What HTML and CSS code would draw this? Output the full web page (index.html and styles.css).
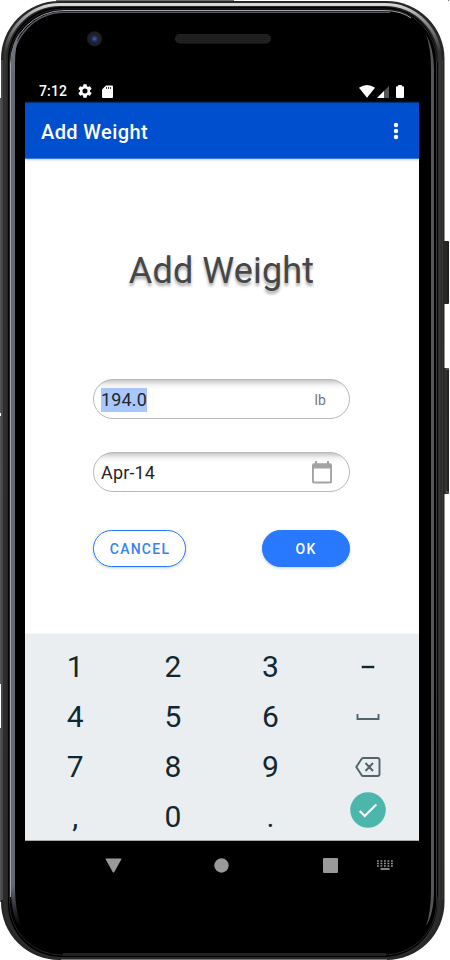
FILE: index.html
```html
<!DOCTYPE html>
<html lang="en">
<head>
<meta charset="utf-8">
<title>Add Weight</title>
<link rel="stylesheet" href="styles.css">
</head>
<body>
<div class="phone">
  <svg class="frame" width="450" height="960" viewBox="0 0 450 960" aria-hidden="true">
    <defs>
      <linearGradient id="rim" x1="0" y1="0" x2="0" y2="1">
        <stop offset="0" stop-color="#d6d8d9"/><stop offset=".012" stop-color="#a0a2a3"/><stop offset=".05" stop-color="#333"/><stop offset="1" stop-color="#2b2b2b"/>
      </linearGradient>
      <linearGradient id="metal" x1="0" y1="0" x2="0" y2="1">
        <stop offset="0" stop-color="#77777b"/><stop offset=".05" stop-color="#656975"/><stop offset=".94" stop-color="#656975"/><stop offset=".985" stop-color="#000"/>
      </linearGradient>
      <pattern id="mesh" width="2" height="2" patternUnits="userSpaceOnUse">
        <rect width="2" height="2" fill="#1b1c1c"/><rect width="1" height="1" fill="#262727"/>
      </pattern>
      <radialGradient id="lens">
        <stop offset="0" stop-color="#506aa8"/><stop offset=".25" stop-color="#263b74"/><stop offset=".55" stop-color="#17203b"/><stop offset=".65" stop-color="#222224"/><stop offset="1" stop-color="#1d1d1e"/>
      </radialGradient>
    </defs>
    <rect x="443" y="241" width="6" height="63" rx="1" fill="#292929"/>
    <rect x="443" y="368" width="6" height="126" rx="1" fill="#333"/>
    <path d="M448 242v61M448 370v122" stroke="#171717"/>
    <path d="M446 369h2.500M446 492h2.500" stroke="#777"/>
    <path d="M448.500 0v1" stroke="#777"/>
    <path d="M0 98h1v315h-1zM0 416h1v268h-1zM0 728h1v174h-1z" fill="#555"/>
    <rect x="1" y="1" width="443.500" height="959" rx="58" fill="#262626"/>
    <path d="M56 .5H234" stroke="#707070"/>
    <path d="M2 60V900" stroke="#484848" stroke-width="2"/>
    <rect x="5" y="4.500" width="435" height="952" rx="55" fill="none" stroke="url(#rim)" stroke-width="3"/>
    <rect x="8" y="7" width="429" height="950" rx="53" fill="#000"/>
    <rect x="9.500" y="9" width="427" height="946" rx="52" fill="none" stroke="#242424"/>
    <path d="M10.500 897V64A53.500 53.500 0 0 1 64 10.500H385Q402 11 411 18" fill="none" stroke="#a4a3a2"/>
    <path d="M13 64A51.500 51.500 0 0 1 64 12.300H390" fill="none" stroke="#555761" stroke-width="1.500"/>
    <path d="M11 890V64Q11 44 20 32Q15 45 15 64V890Q16 926 30 940Q11 925 11 890Z" fill="url(#metal)"/>
    <path d="M426 34Q434 49 434 69V890Q434 914 426 926Q431 912 431 890V69Q431 48 426 34Z" fill="#55555b"/>
    <path d="M436.500 62V897M439.500 60V900M442.500 60V900" stroke="#363636"/>
    <path d="M437.500 62V897M8.500 62V897" stroke="#060606"/>
    <path d="M63 954.500H386" stroke="#222" stroke-width="3"/>
    <path d="M61 959.500H387" stroke="#777"/>
    <circle cx="94.500" cy="38.800" r="7.500" fill="url(#lens)"/>
    <rect x="175.500" y="34.500" width="95" height="8.500" rx="4.200" fill="url(#mesh)" stroke="#242424"/>
  </svg>

  <main class="screen">
    <div class="status">
      <span class="time">7:12</span>
      <svg class="gear" width="14" height="14" viewBox="2 2 20 20"><path fill="#fff" d="M19.140 12.940c.04-.3.060-.61.060-.94 0-.32-.02-.64-.07-.94l2.030-1.580c.18-.14.23-.41.120-.61l-1.920-3.320c-.12-.22-.37-.29-.59-.22l-2.390.96c-.5-.38-1.030-.7-1.620-.94L14.400 2.810c-.04-.24-.24-.41-.48-.41h-3.840c-.24 0-.43.17-.47.41L9.250 5.350C8.660 5.590 8.120 5.920 7.630 6.290L5.240 5.330c-.22-.08-.47 0-.59.22L2.740 8.870c-.12.21-.08.47.12.61l2.030 1.580c-.05.3-.09.63-.09.940s.02.64.07.940l-2.030 1.580c-.18.14-.23.410-.12.610l1.920 3.320c.12.220.370.290.590.220l2.390-.96c.5.380 1.030.7 1.620.94l.36 2.540c.05.240.240.410.480.410h3.840c.24 0 .44-.17.470-.41l.36-2.540c.59-.24 1.130-.56 1.620-.94l2.390.96c.22.080.470 0 .590-.22l1.920-3.320c.12-.22.070-.47-.12-.61l-2.010-1.580zM12 15.600A3.600 3.600 0 1 1 12 8.400a3.600 3.600 0 0 1 0 7.200z"/></svg>
      <svg class="card" width="11" height="13" viewBox="0 0 11 13"><path d="M4 .5h6q1 0 1 1V12q0 1-1 1H1q-1 0-1-1V4.500z" fill="#fff"/><path d="M4.500 2v2M6.500 2v2M8.500 2v2" stroke="#444"/></svg>
      <span class="signals">
        <svg width="16" height="13" viewBox="0 0 16 13"><path d="M0 2.700Q8-2.600 16 2.700L8 12.800Z" fill="#fff"/></svg>
        <svg class="cell" width="12" height="13" viewBox="0 0 12 13"><path d="M0 13L12 1V13Z" fill="#555"/><path d="M0 13L7 6V13Z" fill="#fff"/></svg>
        <svg class="battery" width="8" height="13" viewBox="0 0 8 13"><path d="M2.200 0h3.600v1.300H7q1 0 1 1V12q0 1-1 1H1q-1 0-1-1V2.300q0-1 1-1h1.200z" fill="#fff"/></svg>
      </span>
    </div>

    <header class="appbar">
      <span class="apptitle">Add Weight</span>
      <svg width="6" height="18" viewBox="0 0 6 18"><g fill="#fff"><circle cx="3" cy="3" r="2.200"/><circle cx="3" cy="9" r="2.200"/><circle cx="3" cy="15" r="2.200"/></g></svg>
    </header>

    <section class="content">
      <h1 class="heading">Add Weight</h1>
      <div class="field"><span class="selected">194.0</span><span class="unit">lb</span></div>
      <div class="field date"><span>Apr-14</span>
        <svg class="calendar" width="20" height="23" viewBox="0 0 20 23"><path d="M3 0h2v2.200h10V0h2v2.200h1q2 0 2 2V20.500q0 2-2 2H2q-2 0-2-2V4.200q0-2 2-2h1zM1.900 7.500v13.100h16.200V7.500z" fill="#a4a4a4"/></svg>
      </div>
      <div class="actions"><button class="button cancel">CANCEL</button><button class="button ok">OK</button></div>
    </section>

    <section class="keyboard">
      <span class="key">1</span><span class="key">2</span><span class="key">3</span>
      <span class="key"><svg width="14" height="4" viewBox="0 0 14 4"><path d="M.7 2h12.600" stroke="#112832" stroke-width="2.400"/></svg></span>
      <span class="key">4</span><span class="key">5</span><span class="key">6</span>
      <span class="key"><svg width="24" height="6" viewBox="0 0 24 6"><path d="M1.500 0v5h21V0" fill="none" stroke="#51636c" stroke-width="1.900"/></svg></span>
      <span class="key">7</span><span class="key">8</span><span class="key">9</span>
      <span class="key"><svg width="26" height="20" viewBox="0 0 26 20"><path d="M1.300 10L6.500 2Q7 1 8.200 1H22.500Q24.500 1 24.500 3V17Q24.500 19 22.500 19H8.200Q7 19 6.500 18ZM10.500 6l7.500 8M18 6l-7.500 8" fill="none" stroke="#51636c" stroke-width="1.900"/></svg></span>
      <span class="key">,</span><span class="key">0</span><span class="key">.</span>
      <span class="key"><svg class="done" width="36" height="36" viewBox="0 0 36 36"><circle cx="18" cy="18" r="17.800" fill="#4db6ac"/><path d="M9.700 18.900l5 5L26.300 12.400" fill="none" stroke="#fff" stroke-width="2.100"/></svg></span>
    </section>

    <nav class="navigation">
      <svg width="17" height="15" viewBox="0 0 17 15"><path d="M1.200.5h14.600q1 0 .5 1L9.300 14q-.8 1-1.600 0L.700 1.500Q.2.500 1.200.5" fill="#999"/></svg>
      <svg width="15" height="15" viewBox="0 0 15 15"><circle cx="7.500" cy="7.500" r="7.200" fill="#999"/></svg>
      <svg class="recents" width="15" height="15" viewBox="0 0 15 15"><rect width="15" height="15" rx="1" fill="#999"/></svg>
      <svg class="ime" width="16" height="10" viewBox="0 0 16 10"><path d="M0 1h16M0 3.500h16M0 6h16" stroke="#999" stroke-width="1.600" stroke-dasharray="1.800 1.700"/><path d="M3.500 9h9" stroke="#999" stroke-width="1.700"/></svg>
    </nav>
  </main>
</div>
</body>
</html>
```
FILE: styles.css
```css
* { box-sizing: border-box; }
body { margin: 0; background: #fff; font-family: Roboto, sans-serif; overflow: hidden; }
svg { display: block; flex: none; }
.phone { position: relative; width: 450px; height: 960px; padding: 80px 31px 0 25px; }
.frame { position: absolute; inset: 0; }
.screen { position: relative; width: 394px; overflow: hidden; }
.status { display: flex; align-items: center; height: 22px; padding: 0 15px 0 14px; color: #fff; }
.time { width: 39px; font-size: 14px; font-weight: 500; letter-spacing: .15px; }
.card { margin-left: 10px; }
.signals { display: flex; margin-left: auto; }
.cell { margin-left: 2px; }
.battery { margin-left: 7px; }
.appbar { position: relative; z-index: 1; display: flex; align-items: center; justify-content: space-between; height: 57px; padding: 1px 20px 0 16px; background: #004fce; border-top: 1px solid #002e77; border-bottom: 1px solid #387bdc; box-shadow: 0 1px 2px #ccc; color: #fff; }
.apptitle { font-size: 20px; line-height: 26px; font-weight: 500; letter-spacing: .4px; padding-top: 2px; }
.content { height: 474px; padding: 90px 69px 0 68px; background: #fff; }
.heading { margin: 0 -20px 85px; text-align: center; color: #464646; font-size: 36px; font-weight: 400; line-height: 45px; letter-spacing: .12px; text-shadow: 0 3px 3px #aaa; }
.field { display: flex; align-items: center; justify-content: space-between; height: 40px; padding: 1px 23px 0 7px; border: 1px solid #b8b8b8; border-radius: 20px; background: linear-gradient(#c8c8c8, #f2f2f2 5px, #fff 9px); color: #252525; font-size: 18px; letter-spacing: .15px; }
.selected { line-height: 24px; background: #a8c7ff; }
.unit { color: #777; font-size: 14px; }
.date { margin-top: 33px; }
.date { padding-right: 17px; }
.calendar { margin-top: -1px; }
.actions { display: flex; justify-content: space-between; padding-top: 38px; }
.button { height: 37px; padding: 1px 0 0 1px; border: 1px solid #2979ff; border-radius: 19px; font: 500 14px Roboto, sans-serif; letter-spacing: 1.25px; box-shadow: 0 1px 3px #ccc; }
.cancel { width: 93px; color: #3d80ef; background: #fff; }
.ok { width: 88px; padding-left: 0; color: #fff; background: #2979ff; }
.keyboard { display: grid; grid-template-columns: repeat(4, 97.6px); grid-auto-rows: 50px; height: 208px; padding: 8px 0 0 1.5px; background: #eaeef1; border-top: 1px solid #f4f5f6; border-bottom: 1px solid #aaa; overflow: hidden; color: #112832; font-size: 30px; line-height: 50px; text-align: center; }
.key { display: flex; align-items: center; justify-content: center; }
.key svg { margin-top: -1px; }
.key .done { margin-top: -14px; }
.navigation { display: flex; align-items: center; height: 48px; padding-left: 80px; }
.navigation svg + svg { margin-left: 92px; }
.navigation svg + .recents { margin-left: 93.500px; }
.navigation svg + .ime { margin-left: 39px; }
```
